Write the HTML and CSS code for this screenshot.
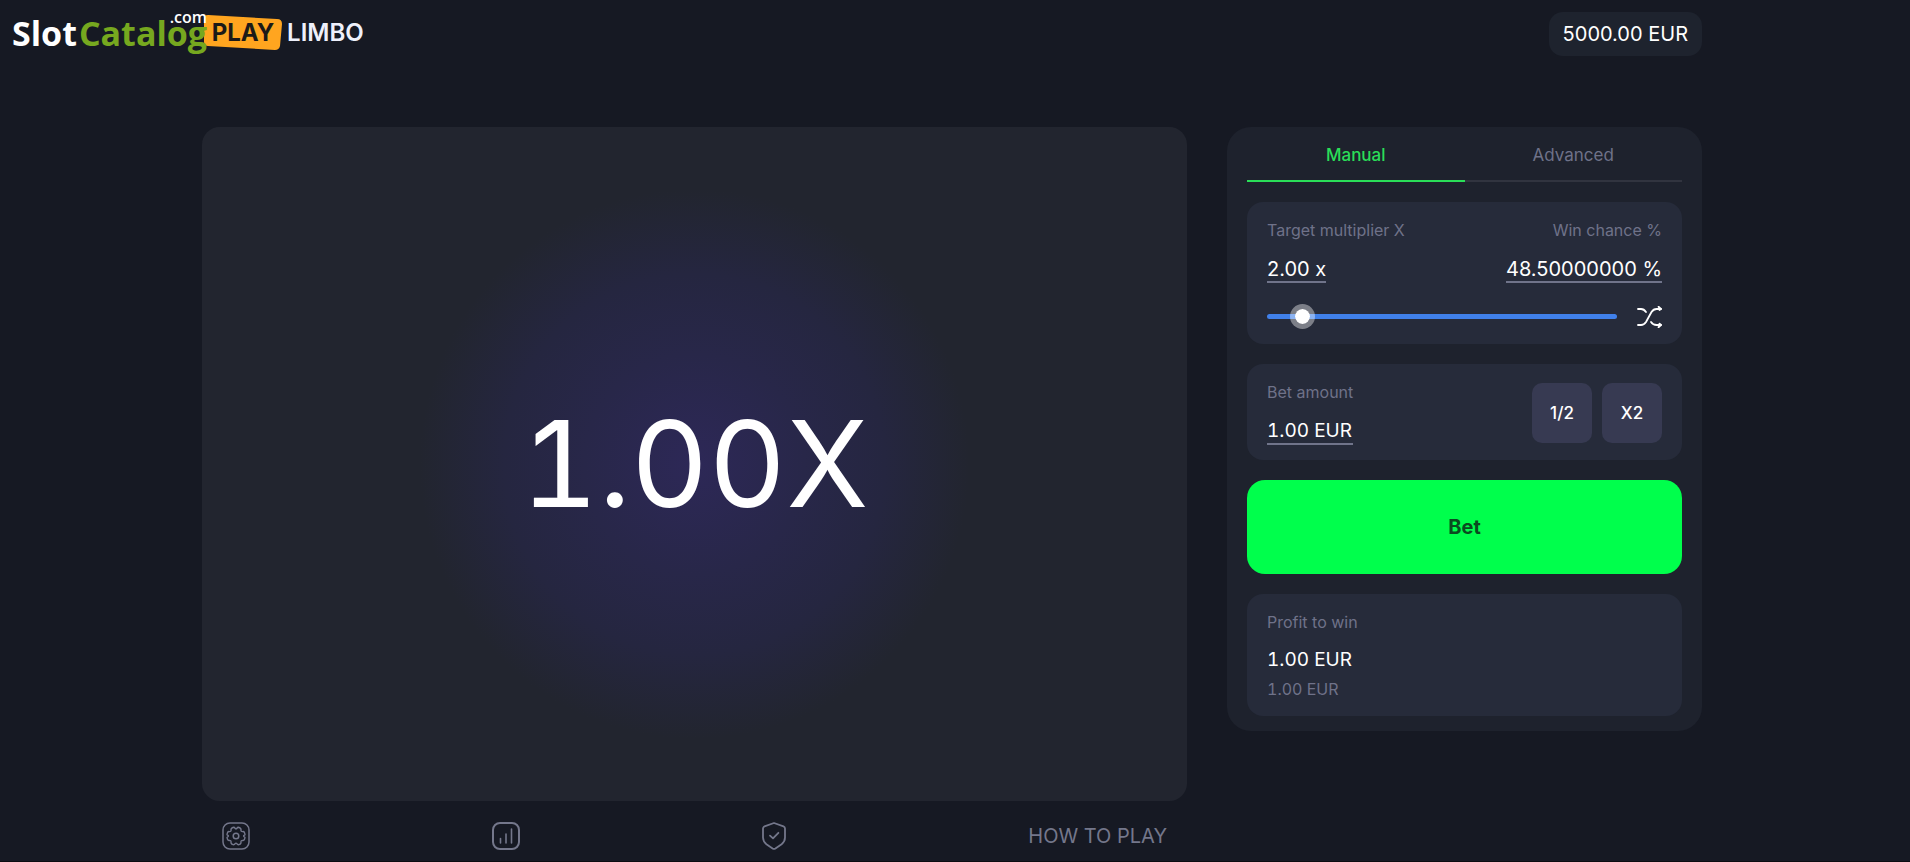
FILE: index.html
```
<!DOCTYPE html>
<html lang="en">
<head>
    <meta charset="UTF-8">
    <meta name="viewport" content="width=device-width, initial-scale=1.0">
    <title>Play Limbo</title>
    <link rel="stylesheet" href="styles.css">
</head>
<body>
    <header class="header">
        <div class="brand">
            <a class="catalog" href="#"><span class="catalog-slot">Slot</span><span class="catalog-name">Catalog</span><span class="catalog-com">.com</span></a>
            <a class="game-logo" href="#">
                <span class="play">
                    <svg class="play-bg" viewBox="0 0 78 36" preserveAspectRatio="none"><path d="M4 0L73 4Q78 4 78 9L76 31Q75 35 71 35L4 31Q0 31 0 27V4Q0 0 4 0Z" fill="#ffa51f"/></svg>
                    <span class="play-text">PLAY</span>
                </span>
                <span class="limbo">LIMBO</span>
            </a>
        </div>
        <div class="header-inner">
            <div class="balance">5000.00 EUR</div>
        </div>
    </header>

    <main class="game">
        <div class="left">
            <section class="stage">
                <div class="multiplier">1.00X</div>
            </section>
            <nav class="toolbar">
                <button class="tool" type="button" aria-label="Settings">
                    <svg width="28" height="28" viewBox="0 0 28 28" fill="none" stroke="currentColor">
                        <rect x="1" y="1" width="26" height="26" rx="7" stroke-width="1.5"/>
                        <circle cx="14" cy="14" r="2.8" stroke-width="1.5"/>
                        <path stroke-width="1.4" stroke-linejoin="round" d="M11.6 5.2Q12.6 5.2 13 6.2Q14 7.4 15 6.2Q15.4 5.2 16.4 5.2Q19 5.8 19 7.6Q18.6 9.6 20.6 9.6Q22 9.4 22.4 10.4L23 12.4Q23 13 22 13.4Q21.2 14 22 14.6Q23 15 23 15.6L22.4 17.6Q22 18.6 20.6 18.4Q18.6 18.4 19 20.4Q19 22.2 16.4 22.8Q15.4 22.8 15 21.8Q14 20.6 13 21.8Q12.6 22.8 11.6 22.8Q9 22.2 9 20.4Q9.4 18.4 7.4 18.4Q6 18.6 5.6 17.6L5 15.6Q5 15 6 14.6Q6.8 14 6 13.4Q5 13 5 12.4L5.6 10.4Q6 9.4 7.4 9.6Q9.4 9.6 9 7.6Q9 5.8 11.6 5.2Z"/>
                    </svg>
                </button>
                <button class="tool" type="button" aria-label="Statistics">
                    <svg width="28" height="28" viewBox="0 0 28 28" fill="none" stroke="currentColor" stroke-linecap="round">
                        <rect x="1" y="1" width="26" height="26" rx="7" stroke-width="2"/>
                        <path stroke-width="1.6" d="M8.5 16.5V21M14 12V21M19.5 7V21"/>
                    </svg>
                </button>
                <button class="tool" type="button" aria-label="Fairness">
                    <svg width="24" height="28" viewBox="0 0 24 28" fill="none" stroke="currentColor" stroke-width="1.8" stroke-linecap="round" stroke-linejoin="round">
                        <path d="M12 1L21.5 4.4Q23 5 23 6.6V15.5Q23 19.5 19.6 22.2L13.4 26.5Q12 27.4 10.6 26.5L4.4 22.2Q1 19.5 1 15.5V6.6Q1 5 2.5 4.4Z"/>
                        <path d="M8 13.6L11 16.4L16.4 10.8"/>
                    </svg>
                </button>
                <button class="tool" type="button">HOW TO PLAY</button>
            </nav>
        </div>

        <aside class="panel">
            <div class="tabs" role="tablist">
                <button class="tab active" type="button" role="tab" aria-selected="true">Manual</button>
                <button class="tab" type="button" role="tab" aria-selected="false">Advanced</button>
            </div>

            <div class="card">
                <div class="row">
                    <div class="field">
                        <label class="label" for="target">Target multiplier X</label>
                        <input class="value value-target" id="target" type="text" value="2.00 x">
                    </div>
                    <div class="field field-right">
                        <label class="label" for="chance">Win chance %</label>
                        <input class="value value-chance" id="chance" type="text" value="48.50000000 %">
                    </div>
                </div>
                <div class="slider-row">
                    <input class="slider" type="range" min="0" max="100" value="7" aria-label="Target multiplier">
                    <button class="shuffle" type="button" aria-label="Random multiplier">
                        <svg width="25" height="22" viewBox="0 0 25 22" fill="none" stroke="currentColor" stroke-width="1.8" stroke-linecap="round" stroke-linejoin="round">
                            <path d="M1 3H4Q7 3 9 6M1 19H4Q7 19 9 16L14.5 6Q16.5 3 19.5 3H24M14 16Q16 19 19.5 19H24"/>
                            <path d="M21.5 0.8L24 3L22.5 4M22.5 17.6L24 19L21.5 21.2"/>
                        </svg>
                    </button>
                </div>
            </div>

            <div class="card row">
                <div class="field">
                    <label class="label" for="bet">Bet amount</label>
                    <input class="value value-bet" id="bet" type="text" value="1.00 EUR">
                </div>
                <div class="quick">
                    <button class="quick-button" type="button">1/2</button>
                    <button class="quick-button" type="button">X2</button>
                </div>
            </div>

            <button class="bet-button" type="button">Bet</button>

            <div class="card">
                <div class="label">Profit to win</div>
                <div class="profit">1.00 EUR</div>
                <div class="label tabular">1.00 EUR</div>
            </div>
        </aside>
    </main>
</body>
</html>
```
FILE: styles.css
```
* {
    box-sizing: border-box;
}

body {
    margin: 0;
    padding-right: 6px;
    min-height: 100vh;
    background-color: #161923;
    border-bottom: 1px solid #0b0c11;
    color: #ffffff;
    font-family: Inter, sans-serif;
}

button,
input {
    font-family: inherit;
    color: inherit;
    margin: 0;
    padding: 0;
    border: none;
    background: none;
}

button {
    cursor: pointer;
}

/* header */
.header {
    position: relative;
    padding-top: 12px;
}

.header-inner {
    display: flex;
    justify-content: flex-end;
    max-width: 1500px;
    margin: 0 auto;
}

.balance {
    padding: 0 14px;
    border-radius: 14px;
    background-color: #1e232e;
    font-size: 20px;
    line-height: 44px;
}

.brand {
    position: absolute;
    left: 12px;
    top: 9px;
    display: flex;
    align-items: center;
}

.catalog {
    position: relative;
    z-index: 1;
    font-family: "Open Sans", sans-serif;
    font-size: 34px;
    font-weight: 700;
    line-height: 48px;
    color: #ffffff;
    text-decoration: none;
}

.catalog-name {
    margin-left: 2px;
    color: #76a81f;
}

.catalog-com {
    position: absolute;
    right: 0;
    top: -2px;
    font-size: 16px;
    font-weight: 600;
    line-height: 20px;
}

.game-logo {
    display: flex;
    align-items: center;
    gap: 5px;
    margin-left: -3px;
    color: #eef0fb;
    text-decoration: none;
    font-size: 24px;
    line-height: 36px;
}

.play {
    position: relative;
    width: 78px;
    text-align: center;
    color: #1c1a18;
    font-weight: 700;
}

.play-bg {
    position: absolute;
    left: 0;
    top: 0;
    width: 100%;
    height: 100%;
}

.play-text {
    position: relative;
}

.limbo {
    font-weight: 600;
}

/* layout */
.game {
    display: grid;
    grid-template-columns: 1fr 475px;
    align-items: start;
    gap: 40px;
    max-width: 1500px;
    margin: 0 auto;
    padding-top: 71px;
}

.stage {
    display: flex;
    align-items: center;
    justify-content: center;
    min-height: 674px;
    border-radius: 18px;
    background: radial-gradient(circle, #2d2857 0, #282749 110px, #252640 190px, #22252f 275px);
}

.multiplier {
    font-size: 120px;
    line-height: 146px;
    font-variant-numeric: tabular-nums;
}

.toolbar {
    display: flex;
    align-items: center;
    justify-content: space-between;
    padding: 21px 20px 10px;
}

.tool {
    display: flex;
    align-items: center;
    color: #74778b;
    font-size: 20px;
    line-height: 28px;
}

/* bet panel */
.panel {
    display: flex;
    flex-direction: column;
    gap: 20px;
    padding: 0 20px 15px;
    border-radius: 24px;
    background-color: #1e222d;
}

.tabs {
    display: flex;
}

.tab {
    flex: 1;
    height: 55px;
    padding-top: 2px;
    border-bottom: 2px solid #31343f;
    color: #6f7289;
    font-size: 17px;
}

.tab.active {
    border-color: #2ade58;
    color: #2ade58;
    font-weight: 500;
}

.card {
    padding: 16px 20px 15px;
    border-radius: 16px;
    background-color: #262b3a;
}

.row {
    display: flex;
    align-items: center;
    justify-content: space-between;
}

.field {
    display: flex;
    flex-direction: column;
    gap: 12px;
}

.field-right {
    align-items: flex-end;
}

.label {
    color: #6f7289;
    font-size: 16px;
    line-height: 24px;
}

.tabular {
    font-variant-numeric: tabular-nums;
}

.value {
    height: 29px;
    padding-top: 2px;
    border-bottom: 2px solid #70748a;
    font-size: 20px;
}

.value-target {
    width: 59px;
}

.value-chance {
    width: 156px;
}

.value-bet {
    width: 86px;
    font-size: 19px;
    font-variant-numeric: tabular-nums;
}

.slider-row {
    display: flex;
    align-items: center;
    gap: 20px;
    margin-top: 21px;
}

.slider {
    flex: 1;
    height: 25px;
    appearance: none;
}

.slider::-webkit-slider-runnable-track {
    height: 5px;
    border-radius: 3px;
    background-color: #4080ea;
}

.slider::-webkit-slider-thumb {
    appearance: none;
    width: 25px;
    height: 25px;
    margin-top: -10px;
    border: 5px solid rgba(255, 255, 255, 0.4);
    border-radius: 50%;
    background-color: #ffffff;
    background-clip: padding-box;
}

.shuffle {
    display: flex;
}

.quick {
    display: flex;
    gap: 10px;
}

.quick-button {
    width: 60px;
    height: 60px;
    border-radius: 10px;
    background-color: #373a52;
    font-size: 17px;
    font-weight: 500;
}

.bet-button {
    height: 94px;
    border-radius: 18px;
    background-color: #00ff4c;
    color: #0b4a20;
    font-size: 20px;
    font-weight: 700;
}

.profit {
    margin: 12px 0 3px;
    font-size: 19px;
    line-height: 28px;
    font-variant-numeric: tabular-nums;
}
```
